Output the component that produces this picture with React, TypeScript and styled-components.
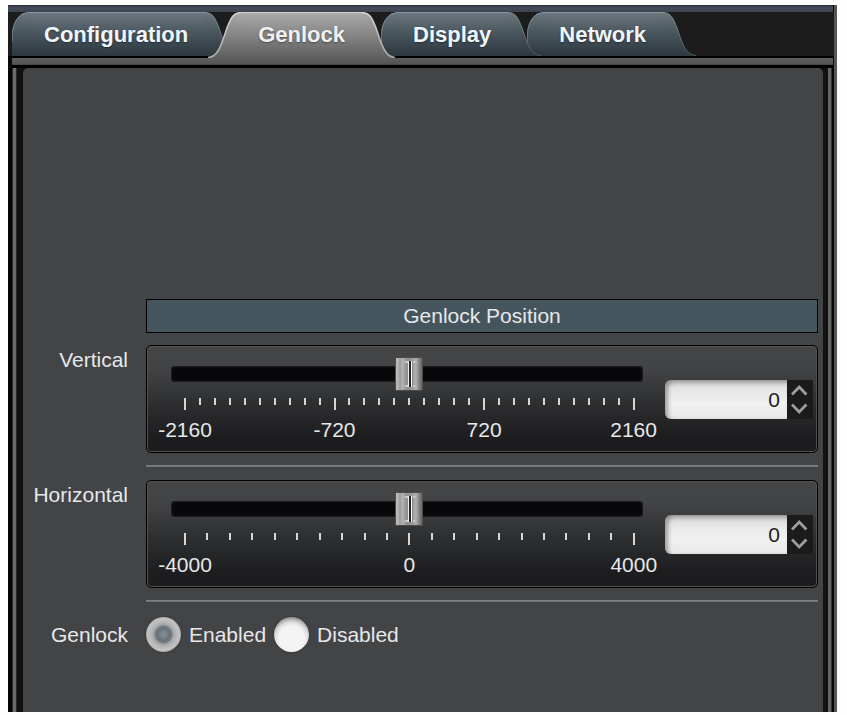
import React, { useId, useState } from "react";
import styled, { createGlobalStyle, css } from "styled-components";

const GlobalStyle = createGlobalStyle`
  *, *::before, *::after { box-sizing: border-box; }
  body {
    margin: 0;
    background: #fefefe;
    font-family: "Liberation Sans", Arial, sans-serif;
    font-size: 21px;
    line-height: 24px;
    color: #e6e8ea;
  }
  button, input { font: inherit; color: inherit; }
`;

/* ---------- window frame ---------- */

const Frame = styled.main`
  display: flex;
  flex-direction: column;
  min-height: calc(100vh - 8px);
  margin: 5px 10px 3px 8px;
  border-right: 3px solid #535557;
  background: #0a0a0a;
`;

const TopStrip = styled.div`
  height: 7px;
  margin-right: 1px;
  background: linear-gradient(#2c313a, #454c59 40%, #3d4450);
`;

const Shelf = styled.div`
  height: 10px;
  margin: 0 1px 0 4px;
  background: linear-gradient(#5e5e5e, #545454 6px, #3c3c3c 7px, #000 7px);
`;

const Body = styled.div`
  flex: 1;
  display: grid;
  grid-template-columns: 15px minmax(0, 1fr) 11px;
`;

const LeftRail = styled.div`
  background: linear-gradient(
    to right,
    #060606 4px, #2a2a2a 4px 5px, #6b6b6b 5px 8px, #2a2a2a 8px 9px, #111 9px
  );
`;

const RightRail = styled.div`
  background: linear-gradient(
    to right,
    #111 5px, #666 5px 8px, #333 8px 9px, #060606 9px
  );
`;

const Panel = styled.section`
  display: grid;
  grid-template-columns: 105px minmax(0, 1fr);
  column-gap: 18px;
  align-content: start;
  padding: 231px 5px 24px 0;
  border-radius: 5px 5px 0 0;
  background: #434446;
`;

/* ---------- tabs ---------- */

const TabList = styled.div`
  display: flex;
  align-items: flex-start;
  height: 46px;
  background: linear-gradient(#1c1c1c 44px, #000 44px);
`;

const TabButton = styled.button<{ $active: boolean; $order: number }>`
  position: relative;
  z-index: ${(p) => (p.$active ? 10 : p.$order)};
  flex: none;
  height: ${(p) => (p.$active ? 46 : 44)}px;
  margin: 0 -14px 0 ${(p) => (p.$active ? -16 : 0)}px;
  padding: ${(p) => (p.$active ? "0 50px" : "2px 50px 0 32px")};
  border: 0;
  background: none;
  color: ${(p) => (p.$active ? "#f0f0f0" : "#eef6fc")};
  font-size: 22px;
  font-weight: 700;
  text-shadow: 0 1px 2px rgba(0, 0, 0, 0.4);
  cursor: pointer;
  &:first-child { margin-left: 4px; }
`;

const TabShape = styled.span`
  position: absolute;
  inset: 0;
  z-index: -1;
  display: flex;
`;

const TabMiddle = styled.span<{ $active: boolean }>`
  flex: 1;
  border-top: 1px solid ${(p) => (p.$active ? "#d0d0d0" : "#8b979f")};
  background: ${(p) =>
    p.$active
      ? "linear-gradient(#aaaaaa, #888 45%, #5f5f5f)"
      : "linear-gradient(#6b767e, #4b575f 45%, #2c373e)"};
`;

const Cap = styled.svg`
  flex: none;
  display: block;
`;

function CapDrawing({ side, active }: { side: "left" | "right"; active: boolean }) {
  const id = useId();
  const height = active ? 46 : 44;
  const stops = active ? ["#aaaaaa", "#888888", "#5f5f5f"] : ["#6b767e", "#4b575f", "#2c373e"];
  const slope = `M0 .5C9 .5 11 6 15 16C20 30 23 ${height - 1} 34 ${height - .5}`;
  const round = "M.5 30V20C2 9 7 .5 18 .5";
  const width = side === "right" || active ? 34 : 18;
  const edge = side === "left" && !active ? round : slope;
  const fill =
    side === "left" && !active
      ? `M0 ${height}V20C2 9 7 0 18 0V${height}Z`
      : `${slope}V${height}H0Z`;
  const mirror = side === "left" && active ? "matrix(-1 0 0 1 34 0)" : undefined;
  return (
    <Cap width={width} height={height} viewBox={`0 0 ${width} ${height}`} aria-hidden="true">
      <defs>
        <linearGradient id={id} x1="0" y1="0" x2="0" y2={height} gradientUnits="userSpaceOnUse">
          <stop offset="0" stopColor={stops[0]} />
          <stop offset=".45" stopColor={stops[1]} />
          <stop offset="1" stopColor={stops[2]} />
        </linearGradient>
        <linearGradient id={`${id}e`} x1="0" y1="0" x2="0" y2={height} gradientUnits="userSpaceOnUse">
          <stop offset="0" stopColor={active ? "#d4d4d4" : "#8b979f"} />
          <stop offset="1" stopColor={active ? "#a8a8a8" : "#4c5860"} />
        </linearGradient>
      </defs>
      <g transform={mirror}>
        <path d={fill} fill={`url(#${id})`} />
        <path d={edge} fill="none" stroke={`url(#${id}e)`} strokeWidth={active ? 1.6 : 1} />
      </g>
    </Cap>
  );
}

/* ---------- form rows ---------- */

const Heading = styled.h2`
  grid-column: 2;
  margin: 0 0 12px;
  padding: 4px;
  border: 1px solid #000;
  background: #45555e;
  font-size: 21px;
  font-weight: 400;
  line-height: 24px;
  text-align: center;
`;

const rowLabel = css`
  padding-top: 3px;
  text-align: right;
`;
const RowLabel = styled.label`${rowLabel}`;
const GroupLabel = styled.span`
  ${rowLabel}
  padding-top: 8px;
`;

const Divider = styled.hr`
  grid-column: 2;
  height: 2px;
  margin: 12px 0 13px;
  border: 0;
  background: linear-gradient(#858687, #6a6b6c);
`;

const ControlBox = styled.div`
  display: flex;
  align-items: center;
  gap: 18px;
  padding: 11px 4px 10px 24px;
  border: 1px solid #000;
  border-radius: 5px;
  box-shadow: inset 0 0 0 1px #505152;
  background: linear-gradient(#454648, #424345 22%, #2d2e30 55%, #1d1d1f 86%);
`;

const SliderColumn = styled.div`
  flex: 1;
  min-width: 0;
`;

const SliderStack = styled.div`
  display: grid;
  align-items: center;
  & > * { grid-area: 1 / 1; }
`;

const Track = styled.div`
  height: 16px;
  margin-right: 4px;
  border-radius: 4px;
  background: #08080a;
  box-shadow: inset 0 0 2px 1px #202123;
`;

const Range = styled.input`
  appearance: none;
  width: 100%;
  height: 34px;
  margin: 0;
  background: transparent;
  cursor: pointer;
  &::-webkit-slider-runnable-track { height: 34px; background: transparent; }
  &::-webkit-slider-thumb {
    appearance: none;
    width: 28px;
    height: 34px;
    border: 1px solid #4c4c4c;
    border-radius: 1px;
    background:
      linear-gradient(to right, #eee 1px, #222 1px 3px, #fff 3px 4px, #888 4px) 12px 3px / 5px 26px no-repeat,
      linear-gradient(to right, transparent, #ddd) 7px 3px / 5px 2px no-repeat,
      linear-gradient(to right, #ddd, transparent) 16px 3px / 5px 2px no-repeat,
      linear-gradient(to right, transparent, #ddd) 7px 27px / 5px 2px no-repeat,
      linear-gradient(to right, #ddd, transparent) 16px 27px / 5px 2px no-repeat,
      linear-gradient(to right, #b8b8b8 2px, #999 4px, #b4b4b4 6px, #8e8e8e 11px, #9a9a9a 16px, #b0b0b0 20px, #858585 23px, #666);
  }
`;

const Scale = styled.div`
  display: flex;
  justify-content: space-between;
  height: 44px;
  margin: 7px 12px 0 13px;
`;

const Tick = styled.span<{ $major: boolean }>`
  display: flex;
  flex-direction: column;
  align-items: center;
  gap: 8px;
  width: 2px;
  white-space: nowrap;
  &::before {
    content: "";
    flex: none;
    width: 2px;
    height: ${(p) => (p.$major ? 12 : 7)}px;
    background: #d6d6d6;
  }
`;

const Spinner = styled.div`
  flex: none;
  display: grid;
  grid-template-columns: 122px 26px;
  height: 39px;
`;

const NumberField = styled.input`
  appearance: textfield;
  width: 100%;
  height: 39px;
  padding: 0 7px 0 8px;
  border: 0;
  border-radius: 6px 0 0 6px;
  background: linear-gradient(#cfcfcf, #e6e6e6 25%, #f1f1f1 60%, #e9e9e9);
  box-shadow: inset 3px 2px 4px rgba(60, 60, 60, 0.45);
  color: #1d1d1d;
  text-align: right;
  &::-webkit-inner-spin-button, &::-webkit-outer-spin-button { appearance: none; margin: 0; }
`;

const StepButtons = styled.div`
  display: grid;
  grid-template-rows: 1fr 1fr;
  background: #1b1b1c;
`;

const StepButton = styled.button`
  display: grid;
  place-items: center;
  padding: 0;
  border: 0;
  background: none;
  cursor: pointer;
`;

const RadioGroup = styled.div`
  display: flex;
  flex-wrap: wrap;
  gap: 8px;
`;

const RadioLabel = styled.label`
  display: flex;
  align-items: center;
  gap: 8px;
  cursor: pointer;
`;

const Radio = styled.input`
  appearance: none;
  width: 35px;
  height: 35px;
  margin: 2px 0;
  border-radius: 50%;
  background: radial-gradient(circle at 50% 62%, #f4f4f4 45%, #dcdcdc 60%, #8c8c8c 78%);
  box-shadow: 0 0 2px #2c2c2c;
  cursor: pointer;
  &:checked {
    background: radial-gradient(
      circle,
      #808890 2px, #6a737b 6px, #747b82 8px, #a4a6a8 10px, #b9babb 13px, #c2c2c2 16px, #9c9c9c 18px
    );
  }
`;

/* ---------- components ---------- */

interface PositionRowProps {
  name: string;
  limit: number;
  intervals: number;
  labels: Record<number, string>;
}

function PositionRow({ name, limit, intervals, labels }: PositionRowProps) {
  const id = useId();
  const [value, setValue] = useState(0);
  const update = (next: number) => setValue(Math.max(-limit, Math.min(limit, next || 0)));
  return (
    <>
      <RowLabel htmlFor={id}>{name}</RowLabel>
      <ControlBox>
        <SliderColumn>
          <SliderStack>
            <Track />
            <Range
              id={id}
              type="range"
              min={-limit}
              max={limit}
              value={value}
              onChange={(e) => update(Number(e.target.value))}
            />
          </SliderStack>
          <Scale>
            {Array.from({ length: intervals + 1 }, (_, i) => (
              <Tick key={i} $major={i in labels}>{labels[i]}</Tick>
            ))}
          </Scale>
        </SliderColumn>
        <Spinner>
          <NumberField
            type="number"
            aria-label={`${name} value`}
            value={value}
            onChange={(e) => update(Number(e.target.value))}
          />
          <StepButtons>
            <StepButton type="button" aria-label={`Increase ${name}`} onClick={() => update(value + 1)}>
              <svg width="18" height="12" viewBox="0 0 18 12" fill="none" stroke="#9d9d9d" strokeWidth="2.8">
                <path d="M1 10.5L8.2 3l7.2 7.5" />
              </svg>
            </StepButton>
            <StepButton type="button" aria-label={`Decrease ${name}`} onClick={() => update(value - 1)}>
              <svg width="18" height="12" viewBox="0 0 18 12" fill="none" stroke="#9d9d9d" strokeWidth="2.8">
                <path d="M1 1.5L8.2 9l7.2-7.5" />
              </svg>
            </StepButton>
          </StepButtons>
        </Spinner>
      </ControlBox>
      <Divider />
    </>
  );
}

const TABS = ["Configuration", "Genlock", "Display", "Network"];

export default function App() {
  const [tab, setTab] = useState("Genlock");
  const [genlock, setGenlock] = useState("Enabled");
  return (
    <>
      <GlobalStyle />
      <Frame>
        <TopStrip />
        <TabList role="tablist">
          {TABS.map((name, i) => {
            const active = name === tab;
            return (
              <TabButton
                key={name}
                type="button"
                role="tab"
                aria-selected={active}
                $active={active}
                $order={TABS.length - i}
                onClick={() => setTab(name)}
              >
                <TabShape>
                  <CapDrawing side="left" active={active} />
                  <TabMiddle $active={active} />
                  <CapDrawing side="right" active={active} />
                </TabShape>
                {name}
              </TabButton>
            );
          })}
        </TabList>
        <Shelf />
        <Body>
          <LeftRail />
          <Panel role="tabpanel">
            <Heading>Genlock Position</Heading>
            <PositionRow
              name="Vertical"
              limit={2160}
              intervals={30}
              labels={{ 0: "-2160", 10: "-720", 20: "720", 30: "2160" }}
            />
            <PositionRow
              name="Horizontal"
              limit={4000}
              intervals={20}
              labels={{ 0: "-4000", 10: "0", 20: "4000" }}
            />
            <GroupLabel id="genlock-mode">Genlock</GroupLabel>
            <RadioGroup role="radiogroup" aria-labelledby="genlock-mode">
              {["Enabled", "Disabled"].map((option) => (
                <RadioLabel key={option}>
                  <Radio
                    type="radio"
                    name="genlock"
                    checked={genlock === option}
                    onChange={() => setGenlock(option)}
                  />
                  {option}
                </RadioLabel>
              ))}
            </RadioGroup>
          </Panel>
          <RightRail />
        </Body>
      </Frame>
    </>
  );
}
